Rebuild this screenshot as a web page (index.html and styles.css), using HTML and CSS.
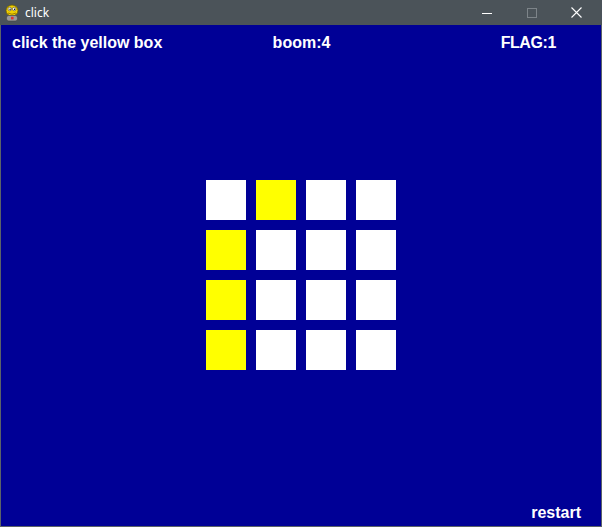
FILE: index.html
```html
<!DOCTYPE html>
<html>
<head>
<meta charset="utf-8">
<link rel="stylesheet" href="styles.css">
</head>
<body>
<div class="window">
  <div class="titlebar">
    <svg class="app-icon" width="14" height="18" viewBox="0 0 14 18">
      <ellipse cx="7" cy="6.5" rx="6" ry="5.5" fill="#f0d000" stroke="#6b5a00" stroke-width="0.8"/>
      <circle cx="4.8" cy="5" r="1.8" fill="#fff" stroke="#333" stroke-width="0.5"/>
      <circle cx="9.2" cy="5" r="1.8" fill="#fff" stroke="#333" stroke-width="0.5"/>
      <circle cx="5.1" cy="5.2" r="0.7" fill="#000"/>
      <circle cx="9.5" cy="5.2" r="0.7" fill="#000"/>
      <path d="M3 9 Q7 11.5 11 9" fill="none" stroke="#8a6a00" stroke-width="0.8"/>
      <rect x="1.5" y="11.5" width="11" height="5.5" rx="2.2" fill="#9a9a9a" stroke="#444" stroke-width="0.6"/>
      <rect x="6" y="12.8" width="2.6" height="2.6" fill="#d33"/>
    </svg>
    <span class="title">click</span>
    <div class="controls">
      <span class="ctl"><svg width="10" height="10" viewBox="0 0 10 10"><path d="M0 5.5H10" stroke="#fff" stroke-width="1"/></svg></span>
      <span class="ctl"><svg width="10" height="10" viewBox="0 0 10 10"><rect x="0.5" y="0.5" width="9" height="9" fill="none" stroke="#7d8489" stroke-width="1"/></svg></span>
      <span class="ctl"><svg width="11" height="11" viewBox="0 0 11 11"><path d="M0.5 0.5L10.5 10.5M10.5 0.5L0.5 10.5" stroke="#fff" stroke-width="1.1"/></svg></span>
    </div>
  </div>
  <div class="content">
    <div class="hud">
      <span class="hud-left">click the yellow box</span>
      <span class="hud-center">boom:4</span>
      <span class="hud-right">FLAG:1</span>
    </div>
    <div class="board">
      <div class="grid">
        <div class="cell"></div><div class="cell yellow"></div><div class="cell"></div><div class="cell"></div>
        <div class="cell yellow"></div><div class="cell"></div><div class="cell"></div><div class="cell"></div>
        <div class="cell yellow"></div><div class="cell"></div><div class="cell"></div><div class="cell"></div>
        <div class="cell yellow"></div><div class="cell"></div><div class="cell"></div><div class="cell"></div>
      </div>
    </div>
    <div class="footer"><span class="restart">restart</span></div>
  </div>
</div>
</body>
</html>
```
FILE: styles.css
```css
html, body {
  margin: 0;
  padding: 0;
  width: 602px;
  height: 527px;
  overflow: hidden;
  background: #4b5359;
}
.window {
  width: 602px;
  height: 527px;
  box-sizing: border-box;
  border: 1px solid #5b6268;
  border-top: none;
  display: flex;
  flex-direction: column;
}
.titlebar {
  height: 25px;
  flex: none;
  background: #4b5359;
  display: flex;
  align-items: center;
  margin: 0 -1px;
}
.app-icon {
  margin-left: 5px;
  margin-right: 6px;
}
.title {
  color: #fff;
  font-family: "Noto Sans", sans-serif;
  font-size: 12px;
  line-height: 1;
}
.controls {
  margin-left: auto;
  display: flex;
  height: 25px;
  padding-right: 3px;
}
.ctl {
  width: 45px;
  display: flex;
  align-items: center;
  justify-content: center;
}
.content {
  flex: 1;
  background: #000096;
  display: grid;
  grid-template-rows: 27px 1fr 28px;
  font-family: "Liberation Sans", Arial, sans-serif;
  font-weight: bold;
  font-size: 16px;
  color: #fff;
}
.hud {
  display: grid;
  grid-template-columns: 1fr auto 1fr;
  padding: 9px 11px 0 11px;
  line-height: 18px;
}
.hud-center { padding-left: 1px; }
.hud-right { justify-self: end; margin-right: 34px; letter-spacing: -0.4px; }
.board {
  display: flex;
  align-items: center;
  justify-content: center;
}
.grid {
  display: grid;
  grid-template-columns: repeat(4, 40px);
  grid-auto-rows: 40px;
  gap: 10px;
}
.cell { background: #fff; }
.cell.yellow { background: #ffff00; }
.footer {
  display: flex;
  justify-content: flex-end;
  align-items: flex-end;
  padding: 0 20px 4px 0;
  line-height: 18px;
}
```
